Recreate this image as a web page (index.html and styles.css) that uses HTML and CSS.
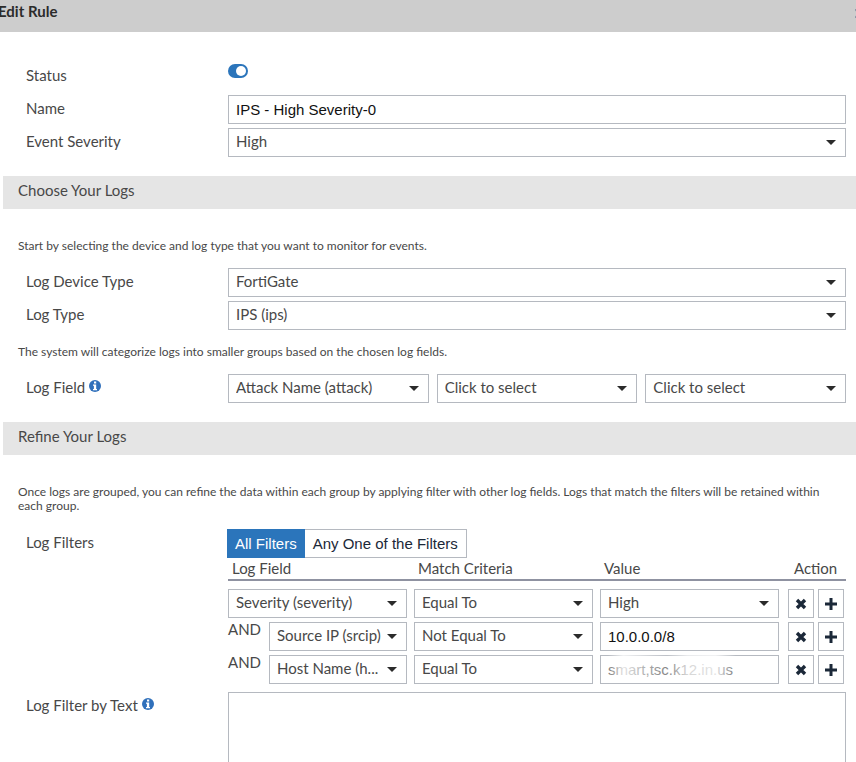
FILE: index.html
```html
<!DOCTYPE html>
<html lang="en">
<head>
<meta charset="utf-8">
<title>Edit Rule</title>
<link rel="stylesheet" href="styles.css">
</head>
<body>
<svg class="sprite" aria-hidden="true">
  <symbol id="info" viewBox="0 0 12 12">
    <circle cx="6" cy="6" r="6" fill="#3070bb"/>
    <path fill="#fff" d="M5 1.5h2.2v2H5zM4 4.5h3.2V9H8v1.2H4V9h.9V5.7H4z"/>
  </symbol>
  <symbol id="cross" viewBox="0 0 12 12">
    <path d="M2 2l8 8M10 2l-8 8" fill="none" stroke="#1b2838" stroke-width="3.4"/>
  </symbol>
  <symbol id="plus" viewBox="0 0 12 12">
    <path d="M6 0v12M0 6h12" fill="none" stroke="#1b2838" stroke-width="3"/>
  </symbol>
</svg>
<div class="dialog">
  <header class="titlebar">
    <h1>Edit Rule</h1>
    <button class="close" type="button" aria-label="Close"><svg width="9" height="9" viewBox="0 0 9 9"><path d="M0 0l9 9M9 0L0 9" stroke="#8f97a8" stroke-width="2"/></svg></button>
  </header>
  <form>
    <div class="group general">
      <div class="row">
        <label for="status">Status</label>
        <div class="status"><input class="toggle" type="checkbox" id="status" checked></div>
      </div>
      <div class="row">
        <label for="name">Name</label>
        <input class="field" id="name" type="text" value="IPS - High Severity-0">
      </div>
      <div class="row">
        <label for="severity">Event Severity</label>
        <div class="select"><select class="field" id="severity"><option>High</option></select></div>
      </div>
    </div>

    <h2>Choose Your Logs</h2>
    <p class="hint lead">Start by selecting the device and log type that you want to monitor for events.</p>
    <div class="group">
      <div class="row">
        <label for="device">Log Device Type</label>
        <div class="select"><select class="field" id="device"><option>FortiGate</option></select></div>
      </div>
      <div class="row">
        <label for="type">Log Type</label>
        <div class="select"><select class="field" id="type"><option>IPS (ips)</option></select></div>
      </div>
    </div>
    <p class="hint">The system will categorize logs into smaller groups based on the chosen log fields.</p>
    <div class="group">
      <div class="row">
        <label for="field1">Log Field <svg class="info"><use href="#info"/></svg></label>
        <div class="triple">
          <div class="select"><select class="field" id="field1"><option>Attack Name (attack)</option></select></div>
          <div class="select"><select class="field" aria-label="Second log field"><option>Click to select</option></select></div>
          <div class="select"><select class="field" aria-label="Third log field"><option>Click to select</option></select></div>
        </div>
      </div>
    </div>

    <h2>Refine Your Logs</h2>
    <p class="hint lead">Once logs are grouped, you can refine the data within each group by applying filter with other log fields. Logs that match the filters will be retained within each group.</p>
    <div class="group filters">
      <div class="row">
        <span class="label" id="filters">Log Filters</span>
        <div role="group" aria-labelledby="filters">
          <div class="segmented">
            <button type="button" class="active" aria-pressed="true">All Filters</button>
            <button type="button" aria-pressed="false">Any One of the Filters</button>
          </div>
          <table>
            <thead>
              <tr><th>Log Field</th><th>Match Criteria</th><th>Value</th><th class="action">Action</th></tr>
            </thead>
            <tbody>
              <tr>
                <td><div class="select"><select class="field" aria-label="Log field 1"><option>Severity (severity)</option></select></div></td>
                <td><div class="select"><select class="field" aria-label="Match criteria 1"><option>Equal To</option></select></div></td>
                <td><div class="select"><select class="field" aria-label="Value 1"><option>High</option></select></div></td>
                <td class="action"><div class="actions"><button type="button" aria-label="Remove"><svg><use href="#cross"/></svg></button><button type="button" aria-label="Add"><svg><use href="#plus"/></svg></button></div></td>
              </tr>
              <tr>
                <td><div class="joined"><span>AND</span><div class="select"><select class="field" aria-label="Log field 2"><option>Source IP (srcip)</option></select></div></div></td>
                <td><div class="select"><select class="field" aria-label="Match criteria 2"><option>Not Equal To</option></select></div></td>
                <td><input class="field" type="text" aria-label="Value 2" value="10.0.0.0/8"></td>
                <td class="action"><div class="actions"><button type="button" aria-label="Remove"><svg><use href="#cross"/></svg></button><button type="button" aria-label="Add"><svg><use href="#plus"/></svg></button></div></td>
              </tr>
              <tr>
                <td><div class="joined"><span>AND</span><div class="select"><select class="field" aria-label="Log field 3"><option>Host Name (h...</option></select></div></div></td>
                <td><div class="select"><select class="field" aria-label="Match criteria 3"><option>Equal To</option></select></div></td>
                <td><div class="faded"><input class="field" type="text" aria-label="Value 3" value="smart,tsc.k12.in.us"></div></td>
                <td class="action"><div class="actions"><button type="button" aria-label="Remove"><svg><use href="#cross"/></svg></button><button type="button" aria-label="Add"><svg><use href="#plus"/></svg></button></div></td>
              </tr>
            </tbody>
          </table>
        </div>
      </div>
      <div class="row">
        <label for="text">Log Filter by Text <svg class="info"><use href="#info"/></svg></label>
        <textarea class="field" id="text" rows="6"></textarea>
      </div>
    </div>
  </form>
</div>
</body>
</html>
```
FILE: styles.css
```css
* { box-sizing: border-box; }

body {
  margin: 0;
  background: #fff;
  color: #484848;
  font: 15px/18px Lato, "Liberation Sans", sans-serif;
}

.sprite { display: none; }

.dialog {
  height: 100vh;
  overflow: hidden;
}

.titlebar {
  display: flex;
  justify-content: space-between;
  align-items: flex-start;
  height: 32px;
  padding-top: 2px;
  background: #cdcdcd;
}

h1 {
  margin: 0 0 0 -2px;
  color: #2b2b2b;
  font-size: 15px;
  line-height: 18px;
}

.close {
  margin: 7px -8px 0 0;
  padding: 0;
  border: 0;
  background: none;
  line-height: 0;
}

h2 {
  margin: 19px 0 0 3px;
  padding: 5px 15px 10px;
  background: #e5e5e5;
  font-size: 15px;
  font-weight: 400;
  line-height: 18px;
}

.group {
  display: flex;
  flex-direction: column;
  gap: 4px;
  padding: 0 10px 0 26px;
}

.general { padding-top: 30px; }

.filters { padding-top: 1px; }

.row {
  display: grid;
  grid-template-columns: 202px minmax(0, 1fr);
}

label, .label { line-height: 26px; }

.hint {
  margin: 0;
  padding: 15px 30px 15px 18px;
  font-size: 12px;
  line-height: 14px;
}

.lead { padding-top: 30px; }

.info {
  width: 12px;
  height: 12px;
  vertical-align: 1px;
}

.status {
  display: flex;
  align-items: flex-start;
  height: 29px;
  padding-top: 2px;
}

.toggle {
  display: flex;
  justify-content: flex-end;
  appearance: none;
  width: 20px;
  height: 14px;
  margin: 0;
  padding: 2px;
  border-radius: 7px;
  background: #2b75bb;
}

.toggle::before {
  content: "";
  width: 10px;
  height: 10px;
  border-radius: 50%;
  background: #fff;
}

.field {
  display: block;
  width: 100%;
  height: 29px;
  margin: 0;
  padding: 0 7px;
  border: 1px solid #b5b9c0;
  border-radius: 0;
  background: #fff;
  color: #111;
  font: 15px "Liberation Sans", sans-serif;
}

select.field {
  appearance: none;
  padding-bottom: 3px;
  color: #484848;
  font-family: Lato, "Liberation Sans", sans-serif;
}

textarea.field {
  height: auto;
  resize: none;
}

.select { position: relative; }

.select::after {
  content: "";
  position: absolute;
  top: 12px;
  right: 10px;
  border: solid transparent;
  border-width: 5px 5px 0;
  border-top-color: #2b2b2b;
  pointer-events: none;
}

.triple {
  display: grid;
  grid-template-columns: repeat(3, minmax(0, 1fr));
  gap: 8px;
}

.segmented {
  display: flex;
  margin-left: -1px;
}

.segmented button {
  height: 29px;
  padding: 0 8px;
  border: 1px solid #b5b9c0;
  border-left: 0;
  background: #fff;
  color: #1b2838;
  font: 15px "Liberation Sans", sans-serif;
}

.segmented .active {
  padding-right: 7px;
  border-color: #2b75bb;
  background: #2b75bb;
  color: #fff;
}

table {
  width: 100%;
  border-collapse: separate;
  border-spacing: 0;
  table-layout: fixed;
}

th {
  padding: 1px 4px 2px;
  border-bottom: 2px solid #8f92a1;
  font-weight: 400;
  line-height: 18px;
  text-align: left;
}

th.action {
  width: 60px;
  padding-left: 8px;
}

td {
  padding: 0 7px 4px 0;
  vertical-align: top;
}

tbody tr:first-child td { padding-top: 8px; }

td.action { padding: 0 0 0 2px; }

.actions {
  display: flex;
  gap: 4px;
}

.actions button {
  display: flex;
  align-items: center;
  justify-content: center;
  width: 26px;
  height: 29px;
  padding: 1px 0 0;
  border: 1px solid #b5b9c0;
  background: #fff;
}

.actions svg {
  width: 12px;
  height: 12px;
}

.joined {
  display: grid;
  grid-template-columns: 41px minmax(0, 1fr);
}

.joined span { line-height: 14px; }

.faded { position: relative; }

.faded .field { color: #777; }

.faded::after {
  content: "";
  position: absolute;
  top: 0;
  left: 8px;
  width: 128px;
  height: 27px;
  background: linear-gradient(90deg, transparent, rgba(255, 255, 255, 0.8) 12%, rgba(255, 255, 255, 0.3) 35%, rgba(255, 255, 255, 0.1) 46%, rgba(255, 255, 255, 0.7) 62%, rgba(255, 255, 255, 0.8) 84%, transparent);
  pointer-events: none;
}
```
